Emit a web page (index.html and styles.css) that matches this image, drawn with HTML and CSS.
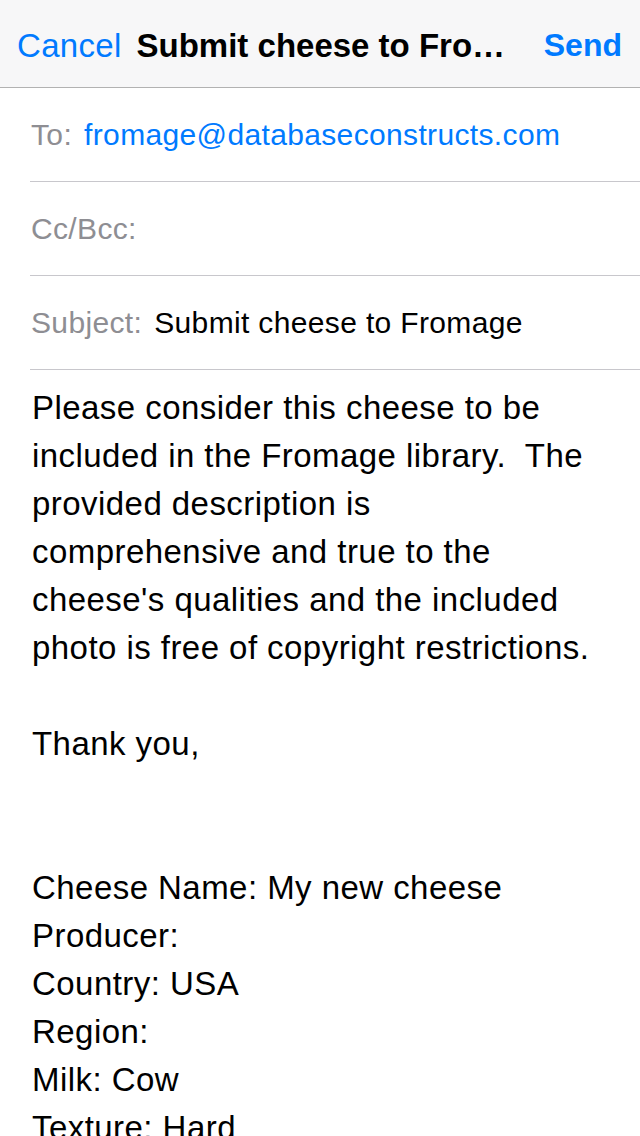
FILE: index.html
```html
<!DOCTYPE html>
<html lang="en">
<head>
<meta charset="utf-8">
<title>Submit cheese to Fromage</title>
<link rel="stylesheet" href="styles.css">
</head>
<body>
<div class="screen">
  <header class="navbar">
    <span class="nav-btn cancel">Cancel</span>
    <span class="nav-title">Submit cheese to Fro…</span>
    <span class="nav-btn send">Send</span>
  </header>
  <section class="fields">
    <div class="field">
      <span class="label">To:</span>
      <span class="value link">fromage@databaseconstructs.com</span>
    </div>
    <div class="field">
      <span class="label">Cc/Bcc:</span>
    </div>
    <div class="field">
      <span class="label">Subject:</span>
      <span class="value">Submit cheese to Fromage</span>
    </div>
  </section>
  <main class="body">
    <p>Please consider this cheese to be included in the Fromage library.&nbsp; The provided description is comprehensive and true to the cheese's qualities and the included photo is free of copyright restrictions.</p>
    <p class="blank">&nbsp;</p>
    <p>Thank you,</p>
    <p class="blank">&nbsp;</p>
    <p class="blank">&nbsp;</p>
    <p>Cheese Name: My new cheese</p>
    <p>Producer:</p>
    <p>Country: USA</p>
    <p>Region:</p>
    <p>Milk: Cow</p>
    <p>Texture: Hard</p>
  </main>
</div>
</body>
</html>
```

FILE: styles.css
```css
html, body {
  margin: 0;
  padding: 0;
  background: #ffffff;
}

body {
  font-family: "Liberation Sans", Arial, sans-serif;
  color: #000000;
}

.screen {
  width: 640px;
  height: 1136px;
  overflow: hidden;
  display: flex;
  flex-direction: column;
}

.navbar {
  height: 88px;
  flex: none;
  box-sizing: border-box;
  background: #f7f7f8;
  border-bottom: 1px solid #b2b2b2;
  display: flex;
  align-items: center;
  padding: 4px 18px 0 17px;
  font-size: 33px;
}

.nav-btn {
  color: #007aff;
  flex: none;
}

.cancel {
  letter-spacing: 0.3px;
}

.send {
  font-weight: bold;
  font-size: 32px;
  margin-left: auto;
}

.nav-title {
  font-weight: bold;
  font-size: 33px;
  margin-left: 15px;
  white-space: nowrap;
}

.fields {
  padding-left: 30px;
}

.field {
  height: 94px;
  box-sizing: border-box;
  border-bottom: 1px solid #c8c7cc;
  display: flex;
  align-items: center;
  font-size: 30px;
  letter-spacing: 0.35px;
  padding-left: 1px;
}

.label {
  color: #8e8e93;
}

.value {
  margin-left: 12px;
}

.link {
  color: #007aff;
}

.body {
  padding: 14px 36px 0 32px;
  font-size: 33px;
  letter-spacing: 0.45px;
  line-height: 48px;
}

.body p {
  margin: 0;
}
```
